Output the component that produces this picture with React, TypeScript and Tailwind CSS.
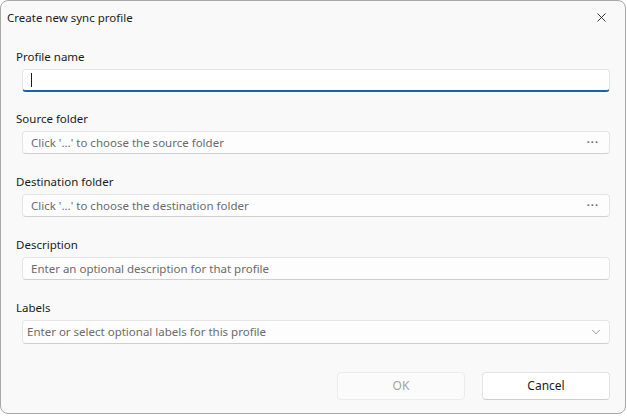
import { X, ChevronDown } from 'lucide-react';

const font = { fontFamily: '"Noto Sans", "Open Sans", sans-serif' };

function Label({ children }: { children: string }) {
  return <div className="h-4 pl-[15px] text-[11.5px] leading-4 text-[#1b1b1b]">{children}</div>;
}

function Field({
  label,
  placeholder,
  browse,
}: {
  label: string;
  placeholder: string;
  browse?: boolean;
}) {
  return (
    <div className="flex flex-col">
      <Label>{label}</Label>
      <div className="ml-[21px] mr-[15px] mt-1 flex h-[23px] items-center rounded-[4px] border border-[#e5e5e5] border-b-[#d0d0d0] bg-[#fdfdfd] pl-2 pr-2">
        <span className="flex-1 truncate text-[11.5px] text-[#6b6b6b]">{placeholder}</span>
        {browse && <span className="pr-0.5 text-[11px] font-bold tracking-[1px] text-[#6a6a6a]">···</span>}
      </div>
    </div>
  );
}

export default function App() {
  return (
    <div className="h-[416px] w-[627px] bg-white" style={font}>
      <div className="flex h-[414px] w-[626px] flex-col rounded-lg border border-[#a8a8a8] bg-[#f9f9f9]">
        {/* title bar */}
        <div className="flex h-[33px] items-center justify-between pl-[6px] pr-[16px]">
          <span className="text-[11.5px] text-[#1b1b1b]">Create new sync profile</span>
          <X className="h-[15px] w-[15px] text-[#1b1b1b]" strokeWidth={1.4} />
        </div>

        <div className="mt-[15px] flex flex-col gap-[19px]">
          <div className="flex flex-col">
            <Label>Profile name</Label>
            <div className="ml-[21px] mr-[15px] mt-1 flex h-[23px] items-center rounded-[4px] border border-[#e5e5e5] border-b-2 border-b-[#1a62a8] bg-white pl-2">
              <span className="h-[14px] w-px bg-[#1b1b1b]" />
            </div>
          </div>
          <div className="flex flex-col gap-[20px]">
            <Field label="Source folder" placeholder="Click '...' to choose the source folder" browse />
            <Field label="Destination folder" placeholder="Click '...' to choose the destination folder" browse />
            <Field label="Description" placeholder="Enter an optional description for that profile" />
            <div className="flex flex-col">
              <Label>Labels</Label>
              <div className="ml-[21px] mr-[15px] mt-1 flex h-[24px] items-center rounded-[4px] border border-[#e5e5e5] border-b-[#d0d0d0] bg-[#fdfdfd] pl-1 pr-[6px]">
                <span className="flex-1 truncate text-[11.5px] text-[#6b6b6b]">
                  Enter or select optional labels for this profile
                </span>
                <ChevronDown className="h-[14px] w-[14px] text-[#6b6b6b]" strokeWidth={1.2} />
              </div>
            </div>
          </div>
        </div>

        <div className="mt-auto mb-[13px] flex justify-end gap-[17px] pr-[15px]">
          <button className="h-[28px] w-[128px] rounded-[4px] border border-[#ececec] bg-[#fbfbfb] text-[12px] text-[#a3a3a3]">
            OK
          </button>
          <button className="h-[28px] w-[128px] rounded-[4px] border border-[#e3e3e3] border-b-[#cfcfcf] bg-white text-[12px] text-[#1b1b1b]">
            Cancel
          </button>
        </div>
      </div>
    </div>
  );
}
